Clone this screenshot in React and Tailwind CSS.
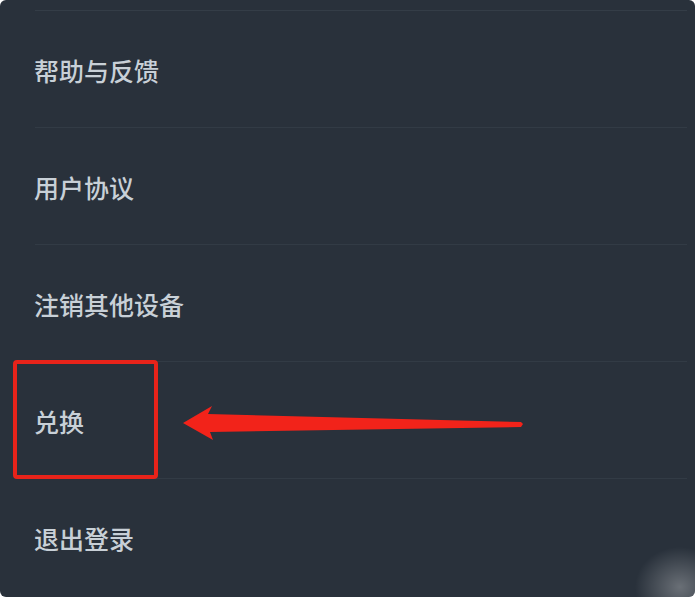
export default function App() {
  const items = ["帮助与反馈", "用户协议", "注销其他设备", "兑换", "退出登录"];
  return (
    <div className="w-[699px] h-[599px] bg-white">
      <div
        className="relative w-[695px] h-[597px] rounded-[6px] bg-[#29313b] overflow-hidden pt-[10px]"
        style={{ fontFamily: '"Noto Sans CJK SC", "Noto Sans", sans-serif' }}
      >
        <div className="ml-[35px] mr-[8px] h-px bg-[#343d47]" />
        {items.map((t, i) => (
          <div key={t}>
            <div className="h-[116px] flex items-center pl-[34px] text-[25px] leading-[36px] font-medium text-[#c8d0d7] pt-[2px]">
              {t}
            </div>
            {i < items.length - 1 && <div className="ml-[35px] mr-[8px] h-px bg-[#323b45]" />}
          </div>
        ))}
        <div className="absolute left-[13px] top-[360px] w-[145px] h-[119px] border-[4px] border-[#e8231a] rounded-[4px]" />
        <svg className="absolute left-0 top-0" width="695" height="597" viewBox="0 0 695 597">
          <polygon
            points="183,423 212,406 208,414 521,422 523,424 521,427 210,432 213,440"
            fill="#f2231a"
          />
        </svg>
        <div className="absolute right-[-30px] bottom-[-30px] w-[90px] h-[80px] rounded-full bg-[radial-gradient(closest-side,rgba(255,255,255,0.3),rgba(255,255,255,0))]" />
      </div>
    </div>
  );
}
